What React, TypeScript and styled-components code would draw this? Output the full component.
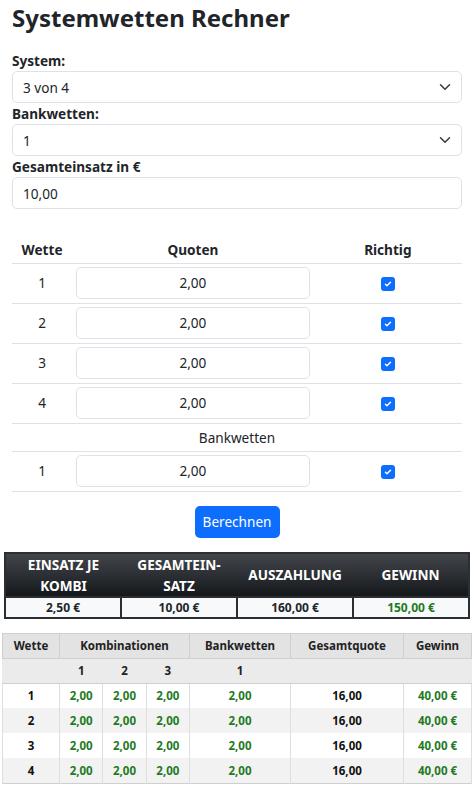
import React from 'react';
import styled, { createGlobalStyle } from 'styled-components';

const GlobalStyle = createGlobalStyle`
  * { box-sizing: border-box; }
  body {
    margin: 0;
    background: #fff;
    color: #212529;
    font-family: "Noto Sans", "Open Sans", sans-serif;
    font-size: 13.6px;
  }
`;

const Page = styled.div`
  width: 474px;
  padding-bottom: 8px;
`;

const FormSection = styled.div`
  padding: 0 12px;
`;

const Title = styled.h1`
  margin: 0 0 18px;
  padding-top: 3px;
  font-size: 24px;
  line-height: 29px;
  font-weight: 700;
`;

const Label = styled.label`
  display: block;
  font-weight: 700;
  font-size: 13.6px;
  line-height: 21px;
`;

const Control = styled.div`
  height: 32px;
  border: 1px solid #dee2e6;
  border-radius: 5px;
  padding: 0 10px;
  display: flex;
  align-items: center;
  justify-content: space-between;
  font-size: 13.6px;
  color: #212529;
`;

const Chevron = () => (
  <svg width="12" height="12" viewBox="0 0 16 16" fill="none">
    <path d="M2 5l6 6 6-6" stroke="#343a40" strokeWidth="2" strokeLinecap="round" strokeLinejoin="round" />
  </svg>
);

const BetTable = styled.table`
  width: 100%;
  margin-top: 28px;
  border-collapse: collapse;
  table-layout: fixed;
`;

const Th = styled.th<{ w: number }>`
  width: ${p => p.w}px;
  font-weight: 700;
  font-size: 13.6px;
  height: 26px;
  padding: 0 4px;
  border-bottom: 1px solid #dee2e6;
`;

const Td = styled.td`
  text-align: center;
  padding: 3px 4px 4px;
  border-bottom: 1px solid #dee2e6;
  font-size: 13.6px;
`;

const BankRow = styled.td`
  text-align: center;
  height: 28px;
  padding: 0;
  border-bottom: 1px solid #dee2e6;
  font-size: 13.6px;
`;

const OddInput = styled.div`
  height: 32px;
  border: 1px solid #dee2e6;
  border-radius: 5px;
  display: flex;
  align-items: center;
  justify-content: center;
  font-size: 13.6px;
`;

const Check = styled.span`
  display: inline-flex;
  width: 14px;
  height: 14px;
  border-radius: 3px;
  background: #0d6efd;
  align-items: center;
  justify-content: center;
  vertical-align: middle;
`;

const CheckBox = () => (
  <Check>
    <svg width="10" height="10" viewBox="0 0 20 20" fill="none">
      <path d="M5 10.5l3 3 7-7" stroke="#fff" strokeWidth="3" strokeLinecap="round" strokeLinejoin="round" />
    </svg>
  </Check>
);

const ButtonRow = styled.div`
  display: flex;
  justify-content: center;
  margin: 14px 0;
`;

const Button = styled.button`
  width: 85px;
  height: 32px;
  border: none;
  border-radius: 5px;
  background: #0d6efd;
  color: #fff;
  font-family: inherit;
  font-size: 13.6px;
`;

const SummaryTable = styled.table`
  width: 466px;
  margin: 0 4px;
  border-collapse: collapse;
  table-layout: fixed;
  border: 2px solid #2b2f33;
`;

const SumTh = styled.th`
  background: linear-gradient(#42464b, #15181b);
  color: #fff;
  font-weight: 700;
  font-size: 13.6px;
  text-transform: uppercase;
  line-height: 21px;
  height: 42px;
  padding: 0 6px;
`;

const SumTd = styled.td<{ green?: boolean }>`
  background: #f8f9fa;
  border: 2px solid #2b2f33;
  text-align: center;
  font-weight: 700;
  font-size: 12px;
  height: 21px;
  padding: 0;
  color: ${p => (p.green ? '#1f7a1f' : '#212529')};
`;

const ResultTable = styled.table`
  width: 470px;
  margin: 14px 2px 0;
  border-collapse: collapse;
  table-layout: fixed;
  border: 1px solid #cfcfcf;
`;

const RTh = styled.th<{ w?: number; sub?: boolean }>`
  ${p => (p.w ? `width: ${p.w}px;` : '')}
  height: 25px;
  padding: 0;
  font-weight: 700;
  font-size: 11.5px;
  background: ${p => (p.sub ? '#ebebeb' : '#e3e3e3')};
  border: 1px solid #cfcfcf;
  ${p => (p.sub ? 'border-left-color: #ebebeb; border-right-color: #ebebeb;' : '')}
  color: #222;
`;

const RTr = styled.tr<{ striped: boolean }>`
  background: ${p => (p.striped ? '#f2f2f2' : '#fff')};
`;

const RTd = styled.td<{ green?: boolean }>`
  height: 25px;
  padding: 0;
  text-align: center;
  font-weight: 700;
  font-size: 11.5px;
  border-left: 1px solid #dedede;
  border-right: 1px solid #dedede;
  color: ${p => (p.green ? '#1f7a1f' : '#111')};
`;

const bets = [1, 2, 3, 4];

export default function App() {
  return (
    <Page>
      <GlobalStyle />
      <FormSection>
        <Title>Systemwetten Rechner</Title>
        <Label>System:</Label>
        <Control>
          <span>3 von 4</span>
          <Chevron />
        </Control>
        <Label>Bankwetten:</Label>
        <Control>
          <span>1</span>
          <Chevron />
        </Control>
        <Label>Gesamteinsatz in €</Label>
        <Control>
          <span>10,00</span>
        </Control>

        <BetTable>
          <thead>
            <tr>
              <Th w={60}>Wette</Th>
              <Th w={241}>Quoten</Th>
              <Th w={148}>Richtig</Th>
            </tr>
          </thead>
          <tbody>
            {bets.map(n => (
              <tr key={n}>
                <Td>{n}</Td>
                <Td>
                  <OddInput>2,00</OddInput>
                </Td>
                <Td>
                  <CheckBox />
                </Td>
              </tr>
            ))}
            <tr>
              <BankRow colSpan={3}>Bankwetten</BankRow>
            </tr>
            <tr>
              <Td>1</Td>
              <Td>
                <OddInput>2,00</OddInput>
              </Td>
              <Td>
                <CheckBox />
              </Td>
            </tr>
          </tbody>
        </BetTable>

        <ButtonRow>
          <Button>Berechnen</Button>
        </ButtonRow>
      </FormSection>

      <SummaryTable>
        <thead>
          <tr>
            <SumTh>Einsatz je Kombi</SumTh>
            <SumTh>Gesamtein-satz</SumTh>
            <SumTh>Auszahlung</SumTh>
            <SumTh>Gewinn</SumTh>
          </tr>
        </thead>
        <tbody>
          <tr>
            <SumTd>2,50 €</SumTd>
            <SumTd>10,00 €</SumTd>
            <SumTd>160,00 €</SumTd>
            <SumTd green>150,00 €</SumTd>
          </tr>
        </tbody>
      </SummaryTable>

      <ResultTable>
        <thead>
          <tr>
            <RTh w={57}>Wette</RTh>
            <RTh colSpan={3}>Kombinationen</RTh>
            <RTh w={101}>Bankwetten</RTh>
            <RTh w={113}>Gesamtquote</RTh>
            <RTh w={68}>Gewinn</RTh>
          </tr>
          <tr>
            <RTh sub />
            <RTh sub w={43}>1</RTh>
            <RTh sub w={44}>2</RTh>
            <RTh sub w={44}>3</RTh>
            <RTh sub>1</RTh>
            <RTh sub />
            <RTh sub />
          </tr>
        </thead>
        <tbody>
          {bets.map(n => (
            <RTr key={n} striped={n % 2 === 0}>
              <RTd>{n}</RTd>
              <RTd green>2,00</RTd>
              <RTd green>2,00</RTd>
              <RTd green>2,00</RTd>
              <RTd green>2,00</RTd>
              <RTd>16,00</RTd>
              <RTd green>40,00 €</RTd>
            </RTr>
          ))}
        </tbody>
      </ResultTable>
    </Page>
  );
}
